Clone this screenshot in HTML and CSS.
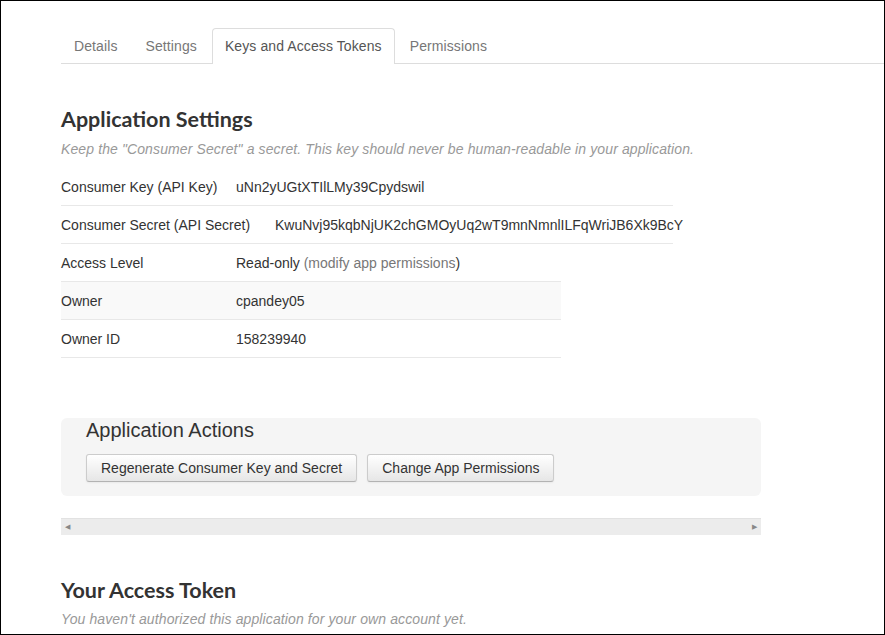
FILE: index.html
```html
<!DOCTYPE html>
<html>
<head>
<meta charset="utf-8">
<link rel="stylesheet" href="styles.css">
</head>
<body>
<div class="frame">
  <ul class="tabs">
    <li class="tab">Details</li>
    <li class="tab">Settings</li>
    <li class="tab active">Keys and Access Tokens</li>
    <li class="tab">Permissions</li>
  </ul>

  <div class="content">
    <h2 class="heading">Application Settings</h2>
    <p class="note">Keep the "Consumer Secret" a secret. This key should never be human-readable in your application.</p>

    <div class="rows">
      <div class="row row-wide">
        <span class="label label-key">Consumer Key (API Key)</span>
        <span class="value">uNn2yUGtXTIlLMy39Cpydswil</span>
      </div>
      <div class="row row-wide">
        <span class="label label-secret">Consumer Secret (API Secret)</span>
        <span class="value">KwuNvj95kqbNjUK2chGMOyUq2wT9mnNmnlILFqWriJB6Xk9BcY</span>
      </div>
      <div class="row row-narrow">
        <span class="label label-std">Access Level</span>
        <span class="value">Read-only <span class="muted">(modify app permissions</span>)</span>
      </div>
      <div class="row row-narrow striped">
        <span class="label label-std">Owner</span>
        <span class="value">cpandey05</span>
      </div>
      <div class="row row-narrow">
        <span class="label label-std">Owner ID</span>
        <span class="value">158239940</span>
      </div>
    </div>

    <div class="actions">
      <h3 class="actions-title">Application Actions</h3>
      <div class="buttons">
        <button class="btn">Regenerate Consumer Key and Secret</button>
        <button class="btn">Change App Permissions</button>
      </div>
    </div>

    <div class="hscroll">
      <span class="arrow">&#9664;</span>
      <span class="arrow">&#9654;</span>
    </div>

    <h2 class="heading heading-token">Your Access Token</h2>
    <p class="note note-token">You haven't authorized this application for your own account yet.</p>
  </div>
</div>
</body>
</html>
```

FILE: styles.css
```css
* { box-sizing: border-box; }

html, body {
  margin: 0;
  padding: 0;
  background: #fff;
}

.frame {
  width: 885px;
  height: 635px;
  border: 1px solid #000;
  overflow: hidden;
  font-family: "Liberation Sans", Arial, sans-serif;
  font-size: 14px;
  color: #333;
}

.tabs {
  list-style: none;
  margin: 27px 0 0 60px;
  padding: 0;
  display: flex;
  border-bottom: 1px solid #ddd;
  height: 36px;
}

.tab {
  padding: 0 12px;
  margin-right: 2px;
  line-height: 35px;
  color: #777;
  letter-spacing: 0.1px;
  border: 1px solid transparent;
  border-bottom: none;
  border-radius: 4px 4px 0 0;
}

.tab.active {
  color: #555;
  background: #fff;
  border-color: #ddd;
  height: 36px;
  margin-bottom: -1px;
}

.content {
  padding-left: 60px;
}

.heading {
  font-family: Lato, "Open Sans", sans-serif;
  font-weight: 700;
  font-size: 21.5px;
  color: #333;
  margin: 40px 0 0;
  line-height: 30px;
}

.note {
  margin: 4px 0 0;
  font-style: italic;
  font-size: 14px;
  letter-spacing: 0.11px;
  color: #999;
  line-height: 22px;
}

.rows {
  margin-top: 8px;
}

.row {
  display: flex;
  align-items: center;
  height: 38px;
  border-bottom: 1px solid #e8e8e8;
}

.row-wide { width: 612px; }
.row-narrow { width: 500px; }

.striped { background: #f9f9f9; }

.label { flex: none; }
.label-key { width: 175px; }
.label-secret { width: 214px; }
.label-std { width: 175px; }

.value { color: #333; }
.muted { color: #777; }

.actions {
  margin-top: 60px;
  width: 700px;
  background: #f5f5f5;
  border-radius: 6px;
  padding: 0 25px;
  height: 78px;
}

.actions-title {
  margin: 0;
  font-weight: 400;
  font-size: 20px;
  line-height: 25px;
  color: #333;
}

.buttons {
  display: flex;
  gap: 10px;
  margin-top: 11px;
}

.btn {
  font-family: "Liberation Sans", Arial, sans-serif;
  font-size: 14px;
  color: #333;
  height: 28px;
  padding: 0 14px;
  border: 1px solid #ccc;
  border-bottom-color: #b3b3b3;
  border-radius: 3px;
  background: linear-gradient(#fff, #e6e6e6);
  box-shadow: 0 1px 2px rgba(0,0,0,.05);
}

.hscroll {
  margin-top: 22px;
  width: 700px;
  height: 17px;
  background: #ececec;
  border-top: 1px solid #e2e2e2;
  display: flex;
  justify-content: space-between;
  align-items: center;
  padding: 0 4px;
}

.arrow {
  font-size: 7px;
  color: #888;
}

.heading-token {
  margin-top: 40px;
}

.note-token {
  margin-top: 3px;
}
```
